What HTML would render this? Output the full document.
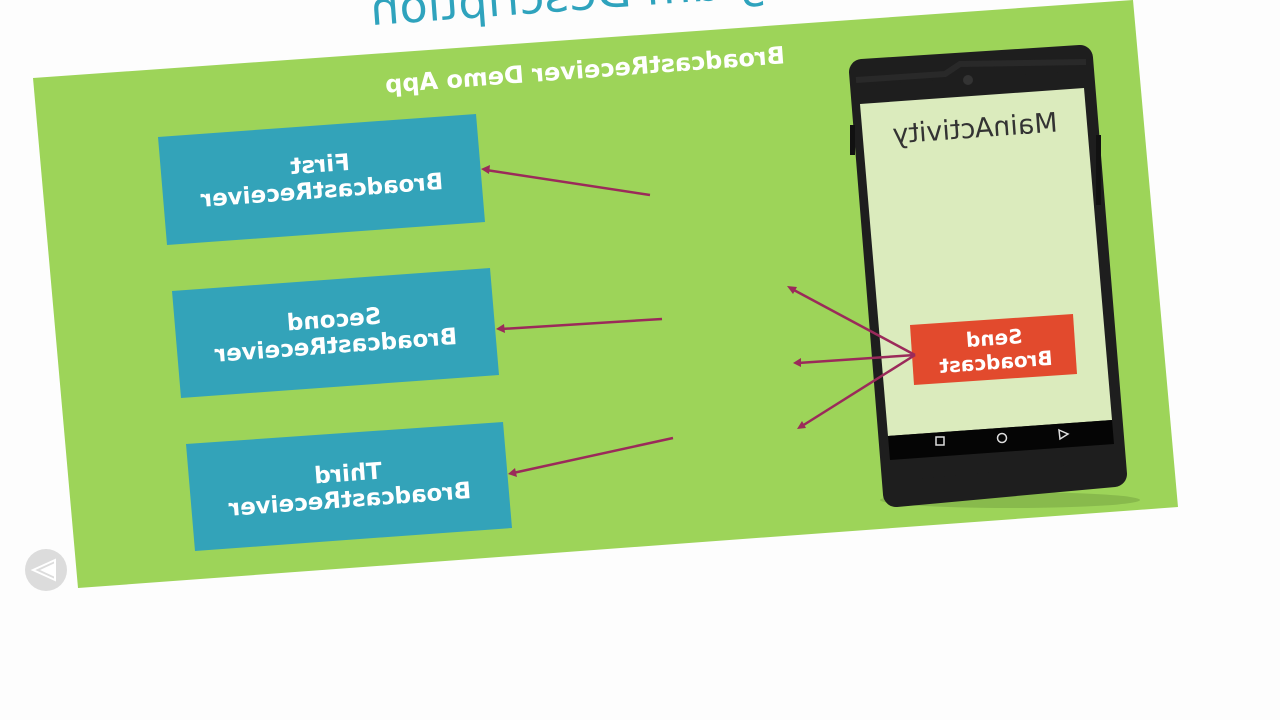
<!DOCTYPE html>
<html><head><meta charset="utf-8"><style>
html,body{margin:0;padding:0;width:1280px;height:720px;overflow:hidden;background:#fdfdfd;}
.t{position:absolute;left:0;top:0;white-space:nowrap;text-align:center;font-family:"DejaVu Sans","Liberation Sans",sans-serif;}
</style></head><body>
<svg width="1280" height="720" style="position:absolute;left:0;top:0">
<polygon points="33,78 1133,0 1178,507 78,588" fill="#9dd459"/>
<polygon points="158,137 476,114 485,222 167,245" fill="#33a3b9"/>
<polygon points="172,291 490,268 499,375 181,398" fill="#33a3b9"/>
<polygon points="186,444 503,422 512,528 195,551" fill="#33a3b9"/>
<ellipse cx="1010" cy="500" rx="130" ry="8" fill="#7aa844" opacity="0.6"/>
<path d="M862,72 L1080,58 L1114,474 L896,494 Z" fill="#1e1e1e" stroke="#1e1e1e" stroke-width="26" stroke-linejoin="round"/>
<path d="M856,80 L945,74 L960,64 L1086,62" fill="none" stroke="#333" stroke-width="6" opacity="0.5"/>
<rect x="850" y="125" width="5" height="30" fill="#111"/>
<rect x="1096" y="135" width="5" height="70" fill="#111"/>
<circle cx="968" cy="80" r="5" fill="#333"/>
<polygon points="860,104 1084,88 1112,420 888,436" fill="#dbebbd"/>
<polygon points="888,436 1112,420 1114,444 890,460" fill="#050505"/>
<rect x="936" y="437" width="8" height="8" fill="none" stroke="#ddd" stroke-width="1.5"/>
<circle cx="1002" cy="438" r="4.5" fill="none" stroke="#ddd" stroke-width="1.5"/>
<polygon points="1059,430 1068,434 1060,439" fill="none" stroke="#ddd" stroke-width="1.5"/>
<polygon points="910,325 1073,314 1077,374 914,385" fill="#e24a2d"/>
<g stroke="#9b2a5a" stroke-width="2.5" fill="none">
<line x1="650" y1="195" x2="486" y2="170"/>
<line x1="662" y1="319" x2="501" y2="329"/>
<line x1="673" y1="438" x2="513" y2="473"/>
<line x1="915" y1="355" x2="792" y2="289"/>
<line x1="915" y1="355" x2="798" y2="363"/>
<line x1="915" y1="355" x2="802" y2="426"/>
</g>
<g fill="#9b2a5a">
<polygon points="481,169 490,165 489,174"/>
<polygon points="496,329 504,324 505,333"/>
<polygon points="508,474 515,468 517,477"/>
<polygon points="787,286 797,287 793,294"/>
<polygon points="793,363 801,358 801,367"/>
<polygon points="797,429 802,421 806,428"/>
</g>
<circle cx="46" cy="570" r="21" fill="#dcdcdc"/>
<polygon points="33,570 55,560 55,580" fill="none" stroke="#fff" stroke-width="2"/>
<polygon points="40,570 55,563 55,577" fill="#fff"/>
</svg>
<div class="t" style="transform:translate(605px,-8px) translate(-50%,-50%) rotate(-4.2deg) scaleX(-1);font-size:46px;color:#2fa3bd;">Program Description</div>
<div class="t" style="transform:translate(585px,70px) translate(-50%,-50%) rotate(-4.2deg) scaleX(-1);font-size:24px;color:#fff;font-weight:bold;">BroadcastReceiver Demo App</div>
<div class="t" style="transform:translate(321px,178px) translate(-50%,-50%) rotate(-4.2deg) scaleX(-1);font-size:23px;color:#fff;line-height:26px;font-weight:bold;">First<br>BroadcastReceiver</div>
<div class="t" style="transform:translate(335px,333px) translate(-50%,-50%) rotate(-4.2deg) scaleX(-1);font-size:23px;color:#fff;line-height:26px;font-weight:bold;">Second<br>BroadcastReceiver</div>
<div class="t" style="transform:translate(349px,487px) translate(-50%,-50%) rotate(-4.2deg) scaleX(-1);font-size:23px;color:#fff;line-height:26px;font-weight:bold;">Third<br>BroadcastReceiver</div>
<div class="t" style="transform:translate(975px,129px) translate(-50%,-50%) rotate(-4.2deg) scaleX(-1);font-size:27px;color:#333;">MainActivity</div>
<div class="t" style="transform:translate(995px,350px) translate(-50%,-50%) rotate(-4.2deg) scaleX(-1);font-size:20px;color:#fff;line-height:24px;font-weight:bold;">Send<br>Broadcast</div>
</body></html>
